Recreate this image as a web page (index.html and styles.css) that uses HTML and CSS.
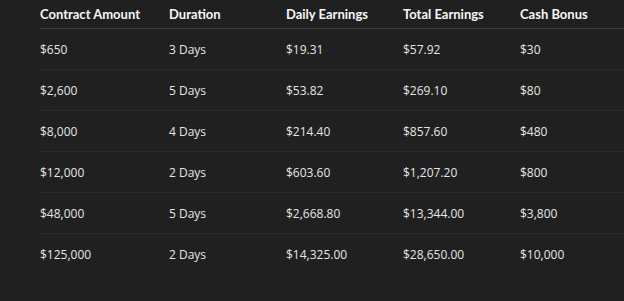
FILE: index.html
```html
<!DOCTYPE html>
<html lang="en">
<head>
<meta charset="utf-8">
<title>Contract Plans</title>
<link rel="stylesheet" href="styles.css">
</head>
<body>
<div class="wrap">
<table class="plans">
  <colgroup>
    <col class="c1"><col class="c2"><col class="c3"><col class="c4"><col class="c5">
  </colgroup>
  <thead>
    <tr><th>Contract Amount</th><th>Duration</th><th>Daily Earnings</th><th>Total Earnings</th><th>Cash Bonus</th></tr>
  </thead>
  <tbody>
    <tr><td>$650</td><td>3 Days</td><td>$19.31</td><td>$57.92</td><td>$30</td></tr>
    <tr><td>$2,600</td><td>5 Days</td><td>$53.82</td><td>$269.10</td><td>$80</td></tr>
    <tr><td>$8,000</td><td>4 Days</td><td>$214.40</td><td>$857.60</td><td>$480</td></tr>
    <tr><td>$12,000</td><td>2 Days</td><td>$603.60</td><td>$1,207.20</td><td>$800</td></tr>
    <tr><td>$48,000</td><td>5 Days</td><td>$2,668.80</td><td>$13,344.00</td><td>$3,800</td></tr>
    <tr><td>$125,000</td><td>2 Days</td><td>$14,325.00</td><td>$28,650.00</td><td>$10,000</td></tr>
  </tbody>
</table>
</div>
</body>
</html>
```
FILE: styles.css
```css
html, body {
  margin: 0;
  padding: 0;
  background: #202020;
}
body {
  font-family: "Open Sans", "Noto Sans", sans-serif;
  color: #e6e6e6;
  width: 624px;
  height: 301px;
  overflow: hidden;
}
.wrap {
  padding-left: 40px;
}
.plans {
  border-collapse: collapse;
  width: 584px;
  table-layout: fixed;
}
.c1 { width: 129px; }
.c2, .c3, .c4 { width: 117px; }
.plans th {
  text-align: left;
  font-family: Lato, "Open Sans", sans-serif;
  font-weight: 700;
  font-size: 13px;
  color: #f6f6f6;
  height: 28px;
  padding: 1px 0 0 0;
  box-sizing: border-box;
  vertical-align: middle;
  border-bottom: 1px solid #3a3a3a;
  white-space: nowrap;
}
.plans td {
  font-size: 12px;
  height: 41px;
  padding: 2px 0 0 0;
  box-sizing: border-box;
  vertical-align: middle;
  border-bottom: 1px solid #2b2b2b;
  white-space: nowrap;
}
.plans tbody tr:last-child td {
  border-bottom: none;
}
```
